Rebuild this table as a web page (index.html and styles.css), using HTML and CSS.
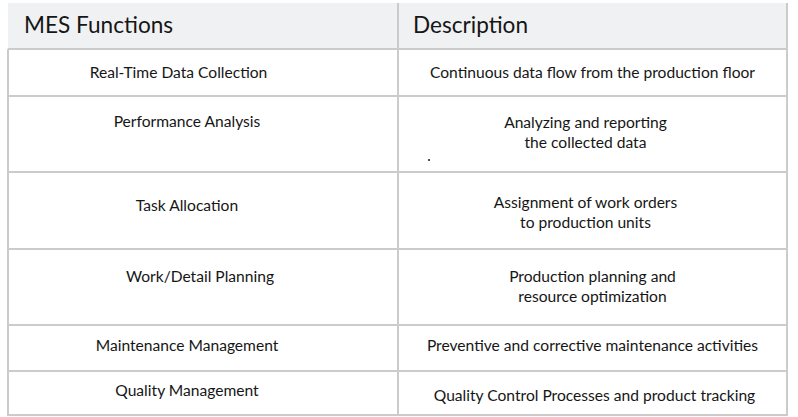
FILE: index.html
```html
<!DOCTYPE html>
<html lang="en">
<head>
<meta charset="utf-8">
<title>MES Functions</title>
<link rel="stylesheet" href="styles.css">
</head>
<body>
<div class="table">
  <div class="cell head head-left">MES Functions</div>
  <div class="cell head head-right">Description</div>

  <div class="cell left r1 shift-more">Real-Time Data Collection</div>
  <div class="cell right r1">Continuous data flow from the production floor</div>

  <div class="cell left r2">Performance Analysis</div>
  <div class="cell right r2 shift-r">Analyzing and reporting<br>the collected data<span class="speck"></span></div>

  <div class="cell left r3">Task Allocation</div>
  <div class="cell right r3b shift-r">Assignment of work orders<br>to production units</div>

  <div class="cell left r4 shift-less">Work/Detail Planning</div>
  <div class="cell right r4">Production planning and<br>resource optimization</div>

  <div class="cell left r5">Maintenance Management</div>
  <div class="cell right r5">Preventive and corrective maintenance activities</div>

  <div class="cell left r6">Quality Management</div>
  <div class="cell right r6b shift-l">Quality Control Processes and product tracking</div>
</div>
</body>
</html>
```
FILE: styles.css
```css
html, body {
  margin: 0;
  padding: 0;
  background: #ffffff;
}

body {
  font-family: "Lato", "Liberation Sans", sans-serif;
  color: #161616;
}

.table {
  margin: 3px 0 0 7px;
  width: 781px;
  display: grid;
  grid-template-columns: 392px 389px;
  grid-template-rows: 47px 47px 76px 77px 76px 46px 44px;
}

.cell {
  box-sizing: border-box;
  border-bottom: 2px solid #cbcbcb;
  border-right: 2px solid #cbcbcb;
  font-size: 15.6px;
  line-height: 20px;
  text-align: center;
  position: relative;
}

.left {
  border-left: 2px solid #cbcbcb;
  padding-right: 32px;
}

.head {
  background: #f0f1f3;
  font-size: 22.6px;
  line-height: 28px;
  text-align: left;
  padding-top: 8px;
}

.head-left {
  border-left: 1px solid #ffffff;
  padding-left: 16px;
}

.head-right {
  padding-left: 14px;
}

.r1 { padding-top: 12px; }
.r2 { padding-top: 14px; }
.right.r2 { padding-top: 15px; }
.r3 { padding-top: 22px; }
.r3b { padding-top: 19px; }
.r4 { padding-top: 16px; }
.r5 { padding-top: 9px; }
.r6 { padding-top: 8px; }
.r6b { padding-top: 13px; }

.left.shift-more { padding-right: 49px; }
.left.shift-less { padding-right: 6px; }
.right.shift-r { padding-right: 14px; }
.right.shift-l { padding-left: 4px; }

.speck {
  position: absolute;
  left: 29px;
  top: 62px;
  width: 2px;
  height: 2px;
  background: #4a4a6a;
}
```
